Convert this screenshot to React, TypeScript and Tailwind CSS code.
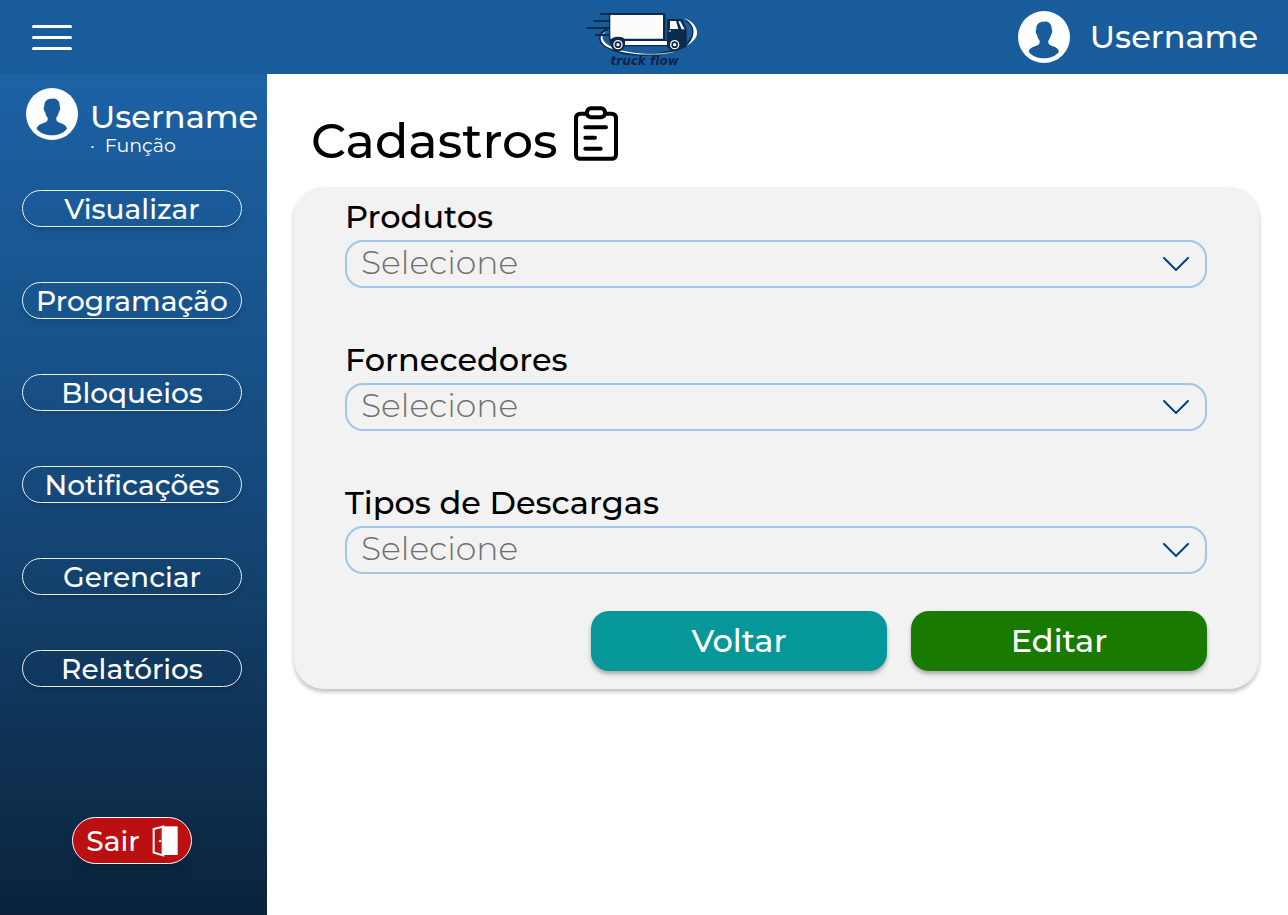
import React from 'react';

const navItems = ['Visualizar', 'Programação', 'Bloqueios', 'Notificações', 'Gerenciar', 'Relatórios'];

const fields = [
  { id: 'produtos', label: 'Produtos' },
  { id: 'fornecedores', label: 'Fornecedores' },
  { id: 'descargas', label: 'Tipos de Descargas' },
];

function Avatar() {
  return (
    <svg viewBox="0 0 156 156" className="size-[52px] shrink-0" aria-hidden="true">
      <circle cx="78" cy="78" r="78" fill="#fff" />
      <path
        d="M78 32C90 30 102 38 101 54C104 56 103 69 99 71C97 80 93 85 91 89C90 98 94 102 101 104C113 107 121 112 123 122C112 136 95 142 78 142C60 142 43 136 32 122C34 112 43 107 55 104C62 102 66 98 65 89C62 85 59 80 57 71C53 69 52 56 55 54C54 39 65 31 78 32Z"
        fill="#1a5c9b"
      />
    </svg>
  );
}

function TruckLogo() {
  return (
    <svg viewBox="51 21 345 180" className="h-[60px] w-[115px]" role="img" aria-label="truck flow">
      <path d="M113 89C85 98 82 125 112 141C165 173 290 170 343 139" fill="none" stroke="#0b2b4b" strokeWidth="7" />
      <path d="M112 93C90 105 94 124 120 138C168 164 275 169 330 149C286 170 168 170 112 141C84 125 87 100 112 93Z" fill="#fff" />
      <path d="M343 54C377 67 393 99 372 120C365 128 358 133 350 137C371 119 383 85 343 54Z" fill="#fff" />
      <path d="M348 61C373 78 377 105 350 132" fill="none" stroke="#0b2b4b" strokeWidth="4" />
      <path d="M90 42H121M71 63H119M51 84H119M75 105H119" stroke="#0b2b4b" strokeWidth="6" />
      <path d="M117 39H286V119H300V139H124L117 119Z" fill="#0b2b4b" />
      <path d="M121 45H279V116H164C158 108 131 108 125 116H121Z" fill="#fcfcfb" />
      <path d="M165 123H293V135H165Z" fill="#fcfcfb" />
      <path d="M291 57H333Q338 57 341 64L350 90V137Q350 142 344 142H291Z" fill="#0b2b4b" />
      <path d="M300 63H318L325 87H300Z" fill="#fcfcfb" />
      <path d="M325 64H331L344 88H335Z" fill="#fcfcfb" />
      <path d="M296 93H303" stroke="#fcfcfb" strokeWidth="3" />
      {[144, 314].map((x) => (
        <g key={x}>
          <circle cx={x} cy="134" r="21" fill="#0b2b4b" />
          <circle cx={x} cy="134" r="12" fill="none" stroke="#fff" strokeWidth="4" />
          <circle cx={x} cy="134" r="5" fill="#fff" />
        </g>
      ))}
      <text x="224" y="194" textAnchor="middle" fill="#0b2450" fontSize="36" fontStyle="italic" fontWeight="700" fontFamily="'DejaVu Sans', sans-serif">
        truck flow
      </text>
    </svg>
  );
}

function ClipboardIcon() {
  return (
    <svg viewBox="0 0 132 164" className="h-[55px] w-11" fill="none" stroke="#000" strokeWidth="12" strokeLinecap="round" strokeLinejoin="round" aria-hidden="true">
      <path d="M38 23H20Q6 23 6 37V144Q6 158 20 158H112Q126 158 126 144V37Q126 23 112 23H94" />
      <rect x="39" y="6" width="54" height="27" rx="12" />
      <path d="M34 63H96M34 95H63M34 128H80" />
    </svg>
  );
}

function DoorIcon() {
  return (
    <svg viewBox="0 0 78 96" className="h-8 w-[26px]" aria-hidden="true">
      <path d="M30 4H77V90H30Z" fill="#fff" />
      <path d="M2 10L37 1V95L2 85Z" fill="#fff" />
      <path d="M8 14L29 9V87L8 80Z" fill="#bb0f11" />
      <circle cx="24" cy="48" r="4" fill="#fff" />
    </svg>
  );
}

export default function App() {
  return (
    <div className="flex min-h-screen flex-col bg-white font-['Montserrat','Inter',sans-serif] text-black">
      <header className="grid h-[74px] grid-cols-3 items-center bg-[#195c9b] pr-[30px] pl-8 text-white">
        <button type="button" aria-label="Menu" className="flex w-10 flex-col gap-2">
          <span className="h-[3px] rounded-full bg-white" />
          <span className="h-[3px] rounded-full bg-white" />
          <span className="h-[3px] rounded-full bg-white" />
        </button>
        <div className="flex justify-center">
          <TruckLogo />
        </div>
        <div className="flex items-center justify-end gap-5">
          <Avatar />
          <span className="text-[32px] leading-9 font-medium">Username</span>
        </div>
      </header>

      <div className="flex flex-1">
        <aside className="flex w-[267px] shrink-0 flex-col bg-linear-to-b from-[#1c62a5] via-[#15497b] to-[#0a233b] px-[22px] pt-[14px] pb-[51px] text-white">
          <div className="flex gap-3 pl-1">
            <Avatar />
            <div className="pt-3">
              <p className="text-[32px] leading-[34px] font-medium">Username</p>
              <p className="text-[19px] leading-6 font-normal">·&nbsp; Função</p>
            </div>
          </div>
          <nav className="flex flex-col gap-[55px] pt-8">
            {navItems.map((item) => (
              <a
                key={item}
                href="#"
                className="flex h-[37px] w-[220px] items-center justify-center rounded-full border border-white/90 text-[28px] leading-8 font-medium shadow-md"
              >
                {item}
              </a>
            ))}
          </nav>
          <button
            type="button"
            className="mt-auto ml-[50px] flex h-[47px] w-[120px] items-center justify-center gap-3 rounded-full border border-white bg-[#bb0f11] text-[28px] leading-8 font-medium shadow-lg"
          >
            Sair
            <DoorIcon />
          </button>
        </aside>

        <main className="flex-1 pt-8 pr-[29px] pl-[27px]">
          <div className="flex h-[56px] items-start gap-4 pl-[17px]">
            <h1 className="pt-2 text-[49px] leading-[54px] font-medium">Cadastros</h1>
            <ClipboardIcon />
          </div>
          <form className="mt-[25px] rounded-[30px] bg-[#f2f2f2] pt-3 pr-[52px] pb-[18px] pl-[51px] shadow-[0_3px_4px_rgba(0,0,0,0.25)]">
            <div className="flex flex-col gap-[54px]">
              {fields.map(({ id, label }) => (
                <div key={id} className="flex flex-col gap-[5px]">
                  <label htmlFor={id} className="text-[32px] leading-9 font-medium">
                    {label}
                  </label>
                  <div className="grid items-center">
                    <select
                      id={id}
                      className="col-start-1 row-start-1 h-12 w-full appearance-none rounded-[18px] border-2 border-[#9fc5e8] bg-transparent pr-14 pb-1 pl-[14px] text-[33px] leading-9 font-light text-[#707070]"
                    >
                      <option>Selecione</option>
                    </select>
                    <svg viewBox="0 0 26 14" className="pointer-events-none col-start-1 row-start-1 mr-[18px] h-[14px] w-[26px] justify-self-end" fill="none" stroke="#064080" strokeWidth="2" strokeLinecap="round" aria-hidden="true">
                      <path d="M1 1L13 13L25 1" />
                    </svg>
                  </div>
                </div>
              ))}
            </div>
            <div className="mt-[37px] flex justify-end gap-6 text-[32px] leading-9 font-medium text-white">
              <button type="button" className="h-[60px] w-[296px] rounded-[18px] bg-[#069799] shadow-[0_3px_4px_rgba(0,0,0,0.3)]">
                Voltar
              </button>
              <button type="submit" className="h-[60px] w-[296px] rounded-[18px] bg-[#187a00] shadow-[0_3px_4px_rgba(0,0,0,0.3)]">
                Editar
              </button>
            </div>
          </form>
        </main>
      </div>
    </div>
  );
}
